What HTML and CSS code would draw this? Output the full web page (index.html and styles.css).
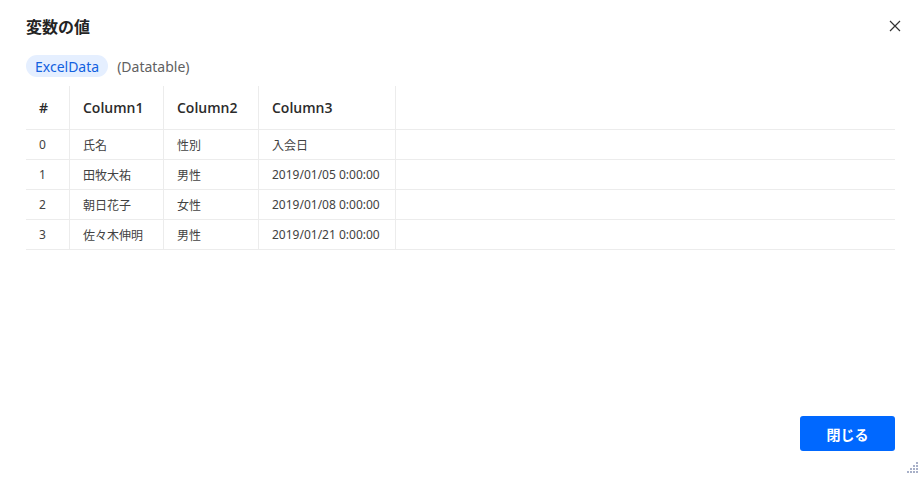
FILE: index.html
```html
<!DOCTYPE html>
<html lang="ja">
<head>
  <meta charset="UTF-8">
  <title>変数の値</title>
  <link rel="stylesheet" href="styles.css">
</head>
<body>
  <div class="dialog">
    <div class="dialog-header">
      <h1 class="dialog-title">変数の値</h1>
      <button class="close-btn" aria-label="閉じる">
        <svg width="12" height="12" viewBox="0 0 12 12">
          <path d="M1 1 L11 11 M11 1 L1 11" stroke="#333" stroke-width="1.2" fill="none"/>
        </svg>
      </button>
    </div>

    <div class="var-info">
      <span class="var-name">ExcelData</span>
      <span class="var-type">(Datatable)</span>
    </div>

    <table class="data-table">
      <thead>
        <tr>
          <th class="col-index">#</th>
          <th class="col-1">Column1</th>
          <th class="col-2">Column2</th>
          <th class="col-3">Column3</th>
          <th class="col-rest"></th>
        </tr>
      </thead>
      <tbody>
        <tr><td>0</td><td>氏名</td><td>性別</td><td>入会日</td><td></td></tr>
        <tr><td>1</td><td>田牧大祐</td><td>男性</td><td>2019/01/05 0:00:00</td><td></td></tr>
        <tr><td>2</td><td>朝日花子</td><td>女性</td><td>2019/01/08 0:00:00</td><td></td></tr>
        <tr><td>3</td><td>佐々木伸明</td><td>男性</td><td>2019/01/21 0:00:00</td><td></td></tr>
      </tbody>
    </table>

    <div class="dialog-footer">
      <button class="primary-btn">閉じる</button>
    </div>

    <!-- esquina para redimensionar -->
    <svg class="resize-grip" width="12" height="12" viewBox="0 0 12 12">
      <g fill="#a8b0c8">
        <rect x="10" y="0" width="2" height="2"/>
        <rect x="7" y="3" width="2" height="2"/>
        <rect x="10" y="3" width="2" height="2"/>
        <rect x="4" y="6" width="2" height="2"/>
        <rect x="7" y="6" width="2" height="2"/>
        <rect x="10" y="6" width="2" height="2"/>
        <rect x="1" y="9" width="2" height="2"/>
        <rect x="4" y="9" width="2" height="2"/>
        <rect x="7" y="9" width="2" height="2"/>
        <rect x="10" y="9" width="2" height="2"/>
      </g>
    </svg>
  </div>
</body>
</html>
```

FILE: styles.css
```css
body {
  margin: 0;
  padding: 0;
  background-color: #fff;
  color: #242424;
  font-family: "Noto Sans", "Noto Sans CJK JP", sans-serif;
}

.dialog {
  position: relative;
  height: 477px;
  padding: 12px 26px 26px;
  box-sizing: border-box;
  display: flex;
  flex-direction: column;
}

.dialog-header {
  display: flex;
  justify-content: space-between;
  align-items: center;
  height: 28px;
}

.dialog-title {
  margin: 0;
  font-size: 16px;
  font-weight: 700;
  font-family: "Noto Sans CJK JP", sans-serif;
  color: #242424;
}

.close-btn {
  display: flex;
  align-items: center;
  justify-content: center;
  padding: 0;
  margin-right: -6px;
  border: none;
  background: none;
  cursor: pointer;
}

.var-info {
  display: flex;
  align-items: center;
  gap: 9px;
  margin-top: 15px;
  height: 22px;
}

.var-name {
  display: flex;
  align-items: center;
  height: 22px;
  padding: 0 9px;
  border-radius: 11px;
  background-color: #e5efff;
  color: #1261e0;
  font-size: 14px;
}

.var-type {
  color: #616161;
  font-size: 14px;
}

.data-table {
  margin-top: 9px;
  width: 100%;
  border-collapse: collapse;
  table-layout: fixed;
}

.data-table th,
.data-table td {
  text-align: left;
  padding: 0 0 0 13px;
  border-bottom: 1px solid #ececec;
  border-right: 1px solid #ececec;
  white-space: nowrap;
}

.data-table th:last-child,
.data-table td:last-child {
  border-right: none;
}

.data-table th {
  height: 43px;
  font-family: "Open Sans", "Noto Sans", sans-serif;
  font-size: 14px;
  font-weight: 600;
  color: #2b2b2b;
}

.data-table td {
  height: 29px;
  font-size: 12px;
  color: #424242;
}

.data-table .col-index { width: 30px; }
.data-table .col-1 { width: 80px; }
.data-table .col-2 { width: 81px; }
.data-table .col-3 { width: 123px; }

.dialog-footer {
  margin-top: auto;
  display: flex;
  justify-content: flex-end;
}

.primary-btn {
  width: 95px;
  height: 35px;
  border: none;
  border-radius: 3px;
  background-color: #0068ff;
  color: #fff;
  font-family: "Noto Sans CJK JP", sans-serif;
  font-size: 14px;
  font-weight: 700;
  cursor: pointer;
}

.resize-grip {
  position: absolute;
  right: 3px;
  bottom: 3px;
}
```
